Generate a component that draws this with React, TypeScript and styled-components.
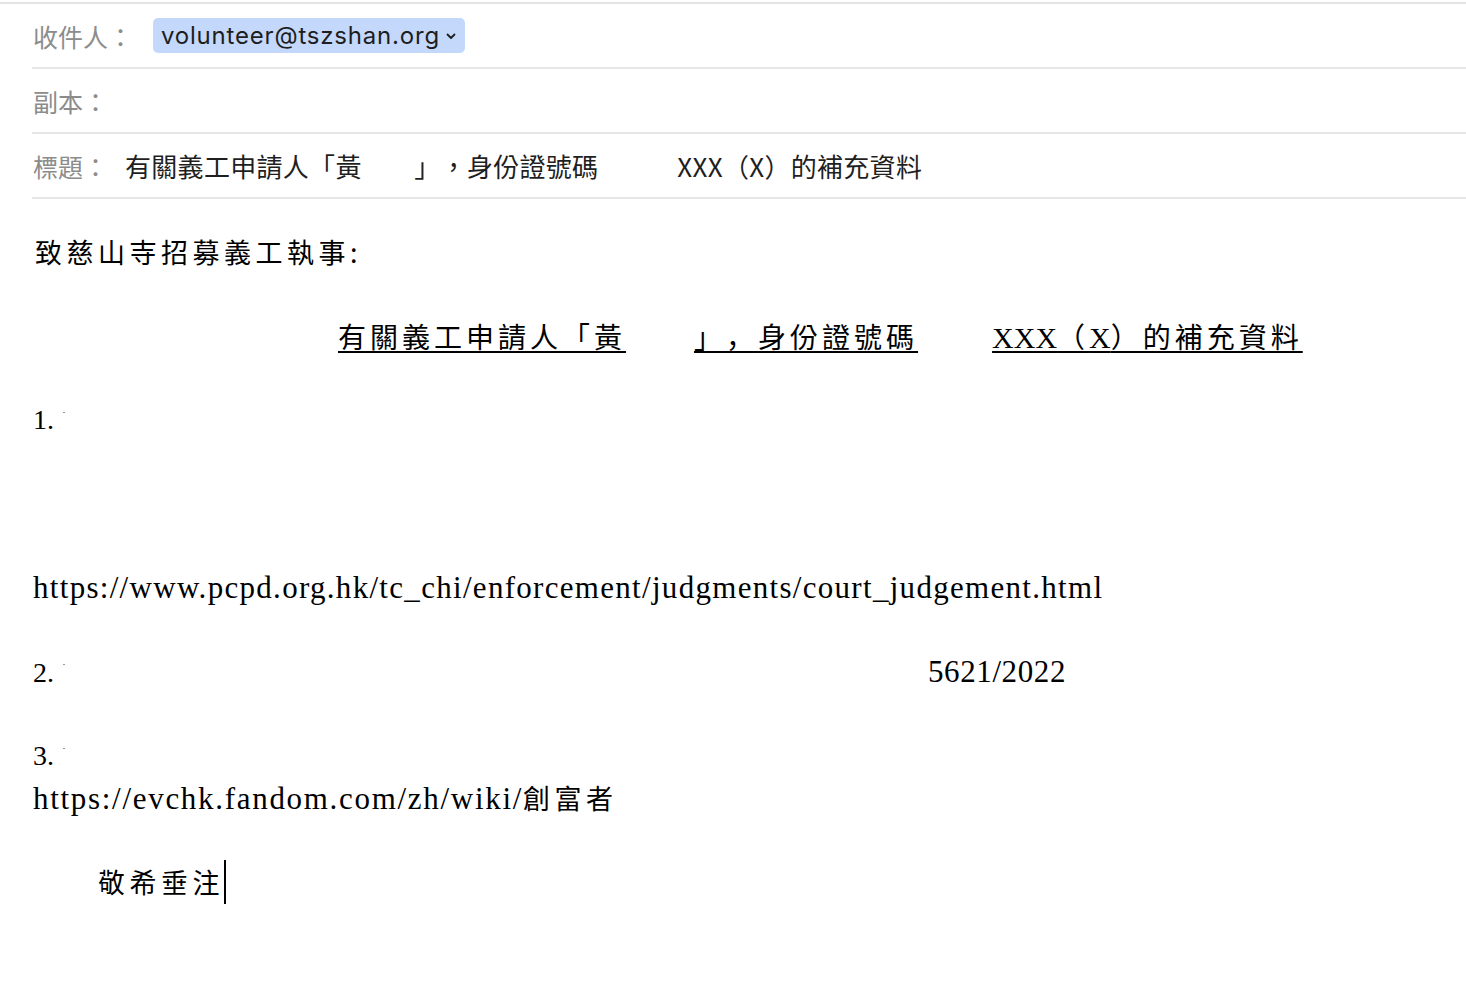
import { FC } from "react";
import styled, { createGlobalStyle } from "styled-components";

const GlobalStyle = createGlobalStyle`
  html, body {
    margin: 0;
    padding: 0;
    background: #ffffff;
  }
  body {
    font-family: "Noto Sans CJK TC", sans-serif;
    text-spacing-trim: space-all;
  }
`;

const ComposeWindow = styled.div`
  margin-top: 2px;
  border-top: 2px solid #e4e4e4;
  min-height: 978px;
`;

const HeaderFields = styled.div`
  margin-left: 32px;
`;

const FieldRow = styled.div`
  display: flex;
  align-items: center;
  height: 63px;
  border-bottom: 2px solid #e6e6e6;
`;

const FieldLabel = styled.span`
  font-family: "Noto Sans CJK TC", sans-serif;
  font-size: 25px;
  color: #8c8c8c;
  width: 92px;
  padding-left: 1px;
  white-space: nowrap;
`;

const RecipientChip = styled.span`
  display: inline-flex;
  align-items: center;
  gap: 5px;
  height: 35px;
  margin-left: 28px;
  padding: 0 8px 0 8px;
  border-radius: 5px;
  background: #c4d8fc;
  color: #1e1e1e;
  font-family: Inter, "Noto Sans", sans-serif;
  font-size: 24px;
  letter-spacing: 0.8px;
`;

const SubjectText = styled.span`
  font-family: "Noto Sans CJK TC", sans-serif;
  font-size: 26px;
  letter-spacing: 0.3px;
  color: #1f1f1f;
  white-space: pre;
`;

const Letter = styled.div`
  padding: 32px 0 0 33px;
  color: #000000;
`;

const Line = styled.div<{ $indent?: number }>`
  display: flex;
  align-items: baseline;
  height: 42px;
  line-height: 42px;
  padding-left: ${(p) => p.$indent ?? 0}px;
  font-family: "Liberation Serif", "Noto Sans CJK TC", serif;
  font-size: 28px;
  white-space: pre;
`;

const Cjk = styled.span`
  font-family: "Noto Sans CJK TC", sans-serif;
  font-size: 27px;
  letter-spacing: 4.5px;
`;

const Roman = styled.span<{ $track: number }>`
  font-family: "Liberation Serif", serif;
  font-size: 31px;
  letter-spacing: ${(p) => p.$track}px;
`;

const Heading = styled.span`
  font-family: "Liberation Serif", "Noto Sans CJK TC", serif;
  font-size: 30px;
  text-decoration: underline;
  text-decoration-thickness: 2px;
  text-underline-offset: 3px;
  white-space: pre;
  & > b {
    font-weight: 400;
    font-family: "Noto Sans CJK TC", sans-serif;
    font-size: 28px;
    letter-spacing: 4px;
  }
  & > i {
    font-style: normal;
    font-family: "Noto Sans CJK SC", sans-serif;
    font-size: 28px;
    letter-spacing: 4px;
  }
`;

const Gap = styled.span<{ $w: number }>`
  display: inline-block;
  width: ${(p) => p.$w}px;
`;

const Fleck = styled.span`
  display: inline-block;
  width: 2px;
  height: 1px;
  margin-left: 9px;
  background: #9a9a9a;
  align-self: center;
  transform: translateY(-8px);
`;

const Caret = styled.span`
  display: inline-block;
  width: 2px;
  height: 44px;
  background: #000000;
  align-self: center;
`;

const Chevron: FC = () => (
  <svg width="12" height="12" viewBox="0 0 12 12" fill="none">
    <path d="M2.5 4.5 L6 8 L9.5 4.5" stroke="#1e1e1e" strokeWidth="1.8" strokeLinecap="round" strokeLinejoin="round" />
  </svg>
);

const Blank: FC<{ n?: number }> = ({ n = 1 }) => (
  <>
    {Array.from({ length: n }, (_, i) => (
      <Line key={i} />
    ))}
  </>
);

const App: FC = () => {
  return (
    <ComposeWindow>
      <GlobalStyle />
      <HeaderFields>
        <FieldRow>
          <FieldLabel>收件人：</FieldLabel>
          <RecipientChip>
            volunteer@tszshan.org
            <Chevron />
          </RecipientChip>
        </FieldRow>
        <FieldRow>
          <FieldLabel>副本：</FieldLabel>
        </FieldRow>
        <FieldRow>
          <FieldLabel>標題：</FieldLabel>
          <SubjectText>有關義工申請人「黃　　」，身份證號碼　　　XXX（X）的補充資料</SubjectText>
        </FieldRow>
      </HeaderFields>

      <Letter>
        <Line $indent={2}>
          <Cjk>致慈山寺招募義工執事:</Cjk>
        </Line>
        <Blank />
        <Line $indent={305}>
          <Heading>
            <b>有關義工申請人「黃</b>
          </Heading>
          <Gap $w={68} />
          <Heading>
            <b>」</b>
            <i>，</i>
            <b>身份證號碼</b>
          </Heading>
          <Gap $w={74} />
          <Heading>
            XXX<b>（</b>X<b>）的補充資料</b>
          </Heading>
        </Line>
        <Blank />
        <Line>
          1.
          <Fleck />
        </Line>
        <Blank n={3} />
        <Line>
          <Roman $track={1.3}>https://www.pcpd.org.hk/tc_chi/enforcement/judgments/court_judgement.html</Roman>
        </Line>
        <Blank />
        <Line>
          2.
          <Fleck />
          <Gap $w={863} />
          <Roman $track={0.6}>5621/2022</Roman>
        </Line>
        <Blank />
        <Line>
          3.
          <Fleck />
        </Line>
        <Line>
          <Roman $track={1.7}>https://evchk.fandom.com/zh/wiki/</Roman>
          <Cjk>創富者</Cjk>
        </Line>
        <Blank />
        <Line $indent={65}>
          <Cjk>敬希垂注</Cjk>
          <Caret />
        </Line>
      </Letter>
    </ComposeWindow>
  );
};

export default App;
